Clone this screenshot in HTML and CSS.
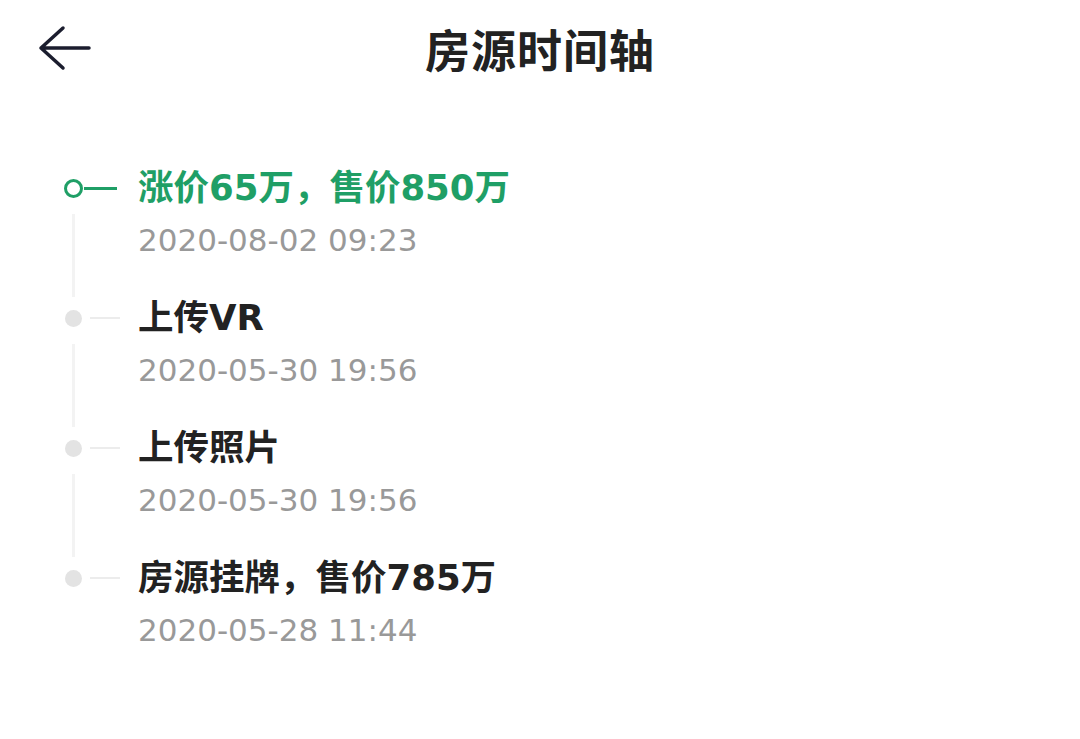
FILE: index.html
```html
<!DOCTYPE html>
<html lang="zh-CN">
<head>
    <meta charset="UTF-8">
    <meta name="viewport" content="width=device-width, initial-scale=1.0">
    <title>房源时间轴</title>
    <link rel="stylesheet" href="styles.css">
</head>
<body>
    <div class="header">
        <button class="back-button" onclick="history.back()">
            <svg width="54" height="46" viewBox="0 0 54 46">
                <path d="M26 3 L4 23 L26 43 M4 23 L52 23" fill="none" stroke="#1b1d2e" stroke-width="3.5" stroke-linecap="round" stroke-linejoin="round"/>
            </svg>
        </button>
        <h1 class="title">房源时间轴</h1>
        <div></div>
    </div>

    <div class="timeline">
        <div class="item active">
            <div class="marker">
                <div class="marker-head"><span class="dot"></span><span class="dash"></span></div>
                <div class="line"></div>
            </div>
            <div class="content">
                <p class="item-title">涨价65万，售价850万</p>
                <p class="item-time">2020-08-02 09:23</p>
            </div>
        </div>
        <div class="item">
            <div class="marker">
                <div class="marker-head"><span class="dot"></span><span class="dash"></span></div>
                <div class="line"></div>
            </div>
            <div class="content">
                <p class="item-title">上传VR</p>
                <p class="item-time">2020-05-30 19:56</p>
            </div>
        </div>
        <div class="item">
            <div class="marker">
                <div class="marker-head"><span class="dot"></span><span class="dash"></span></div>
                <div class="line"></div>
            </div>
            <div class="content">
                <p class="item-title">上传照片</p>
                <p class="item-time">2020-05-30 19:56</p>
            </div>
        </div>
        <div class="item last">
            <div class="marker">
                <div class="marker-head"><span class="dot"></span><span class="dash"></span></div>
            </div>
            <div class="content">
                <p class="item-title">房源挂牌，售价785万</p>
                <p class="item-time">2020-05-28 11:44</p>
            </div>
        </div>
    </div>
</body>
</html>
```

FILE: styles.css
```css
body {
    margin: 0;
    font-family: "Noto Sans", "Noto Sans CJK SC", sans-serif;
    background: #fff;
    color: #222;
}
.header {
    display: grid;
    grid-template-columns: 1fr auto 1fr;
    align-items: center;
    height: 96px;
}
.back-button {
    justify-self: start;
    margin-left: 37px;
    padding: 0;
    border: none;
    background: transparent;
    cursor: pointer;
    display: flex;
}
.title {
    margin: 0;
    font-family: "Noto Sans CJK SC", sans-serif;
    font-size: 45px;
    font-weight: bold;
    color: #222;
    letter-spacing: 1px;
}
.timeline {
    padding: 66px 0 0 65px;
}
.item {
    display: flex;
    height: 130px;
}
.marker {
    display: flex;
    flex-direction: column;
    width: 73px;
}
.marker-head {
    display: flex;
    align-items: center;
    height: 52px;
}
.dot {
    width: 17px;
    height: 17px;
    border-radius: 50%;
    background: #e3e3e3;
    box-sizing: border-box;
}
.dash {
    width: 30px;
    height: 2px;
    margin-left: 8px;
    background: #ececec;
}
.active .dot {
    width: 19px;
    height: 19px;
    border: 3px solid #1f9f66;
    background: #fff;
    margin-left: -1px;
}
.active .dash {
    width: 33px;
    height: 3px;
    margin-left: 1px;
    background: #1f9f66;
}
.line {
    flex: 1;
    width: 3px;
    margin: 0 0 -5px 7px;
    background: #f3f3f3;
}
.item-title {
    margin: 0;
    font-family: "DejaVu Sans", "Noto Sans CJK SC", sans-serif;
    font-size: 35.5px;
    font-weight: bold;
    line-height: 52px;
}
.active .item-title {
    color: #1f9f66;
}
.item-time {
    margin: 0;
    font-family: "DejaVu Sans", sans-serif;
    font-size: 31px;
    line-height: 52px;
    color: #999;
}
```
